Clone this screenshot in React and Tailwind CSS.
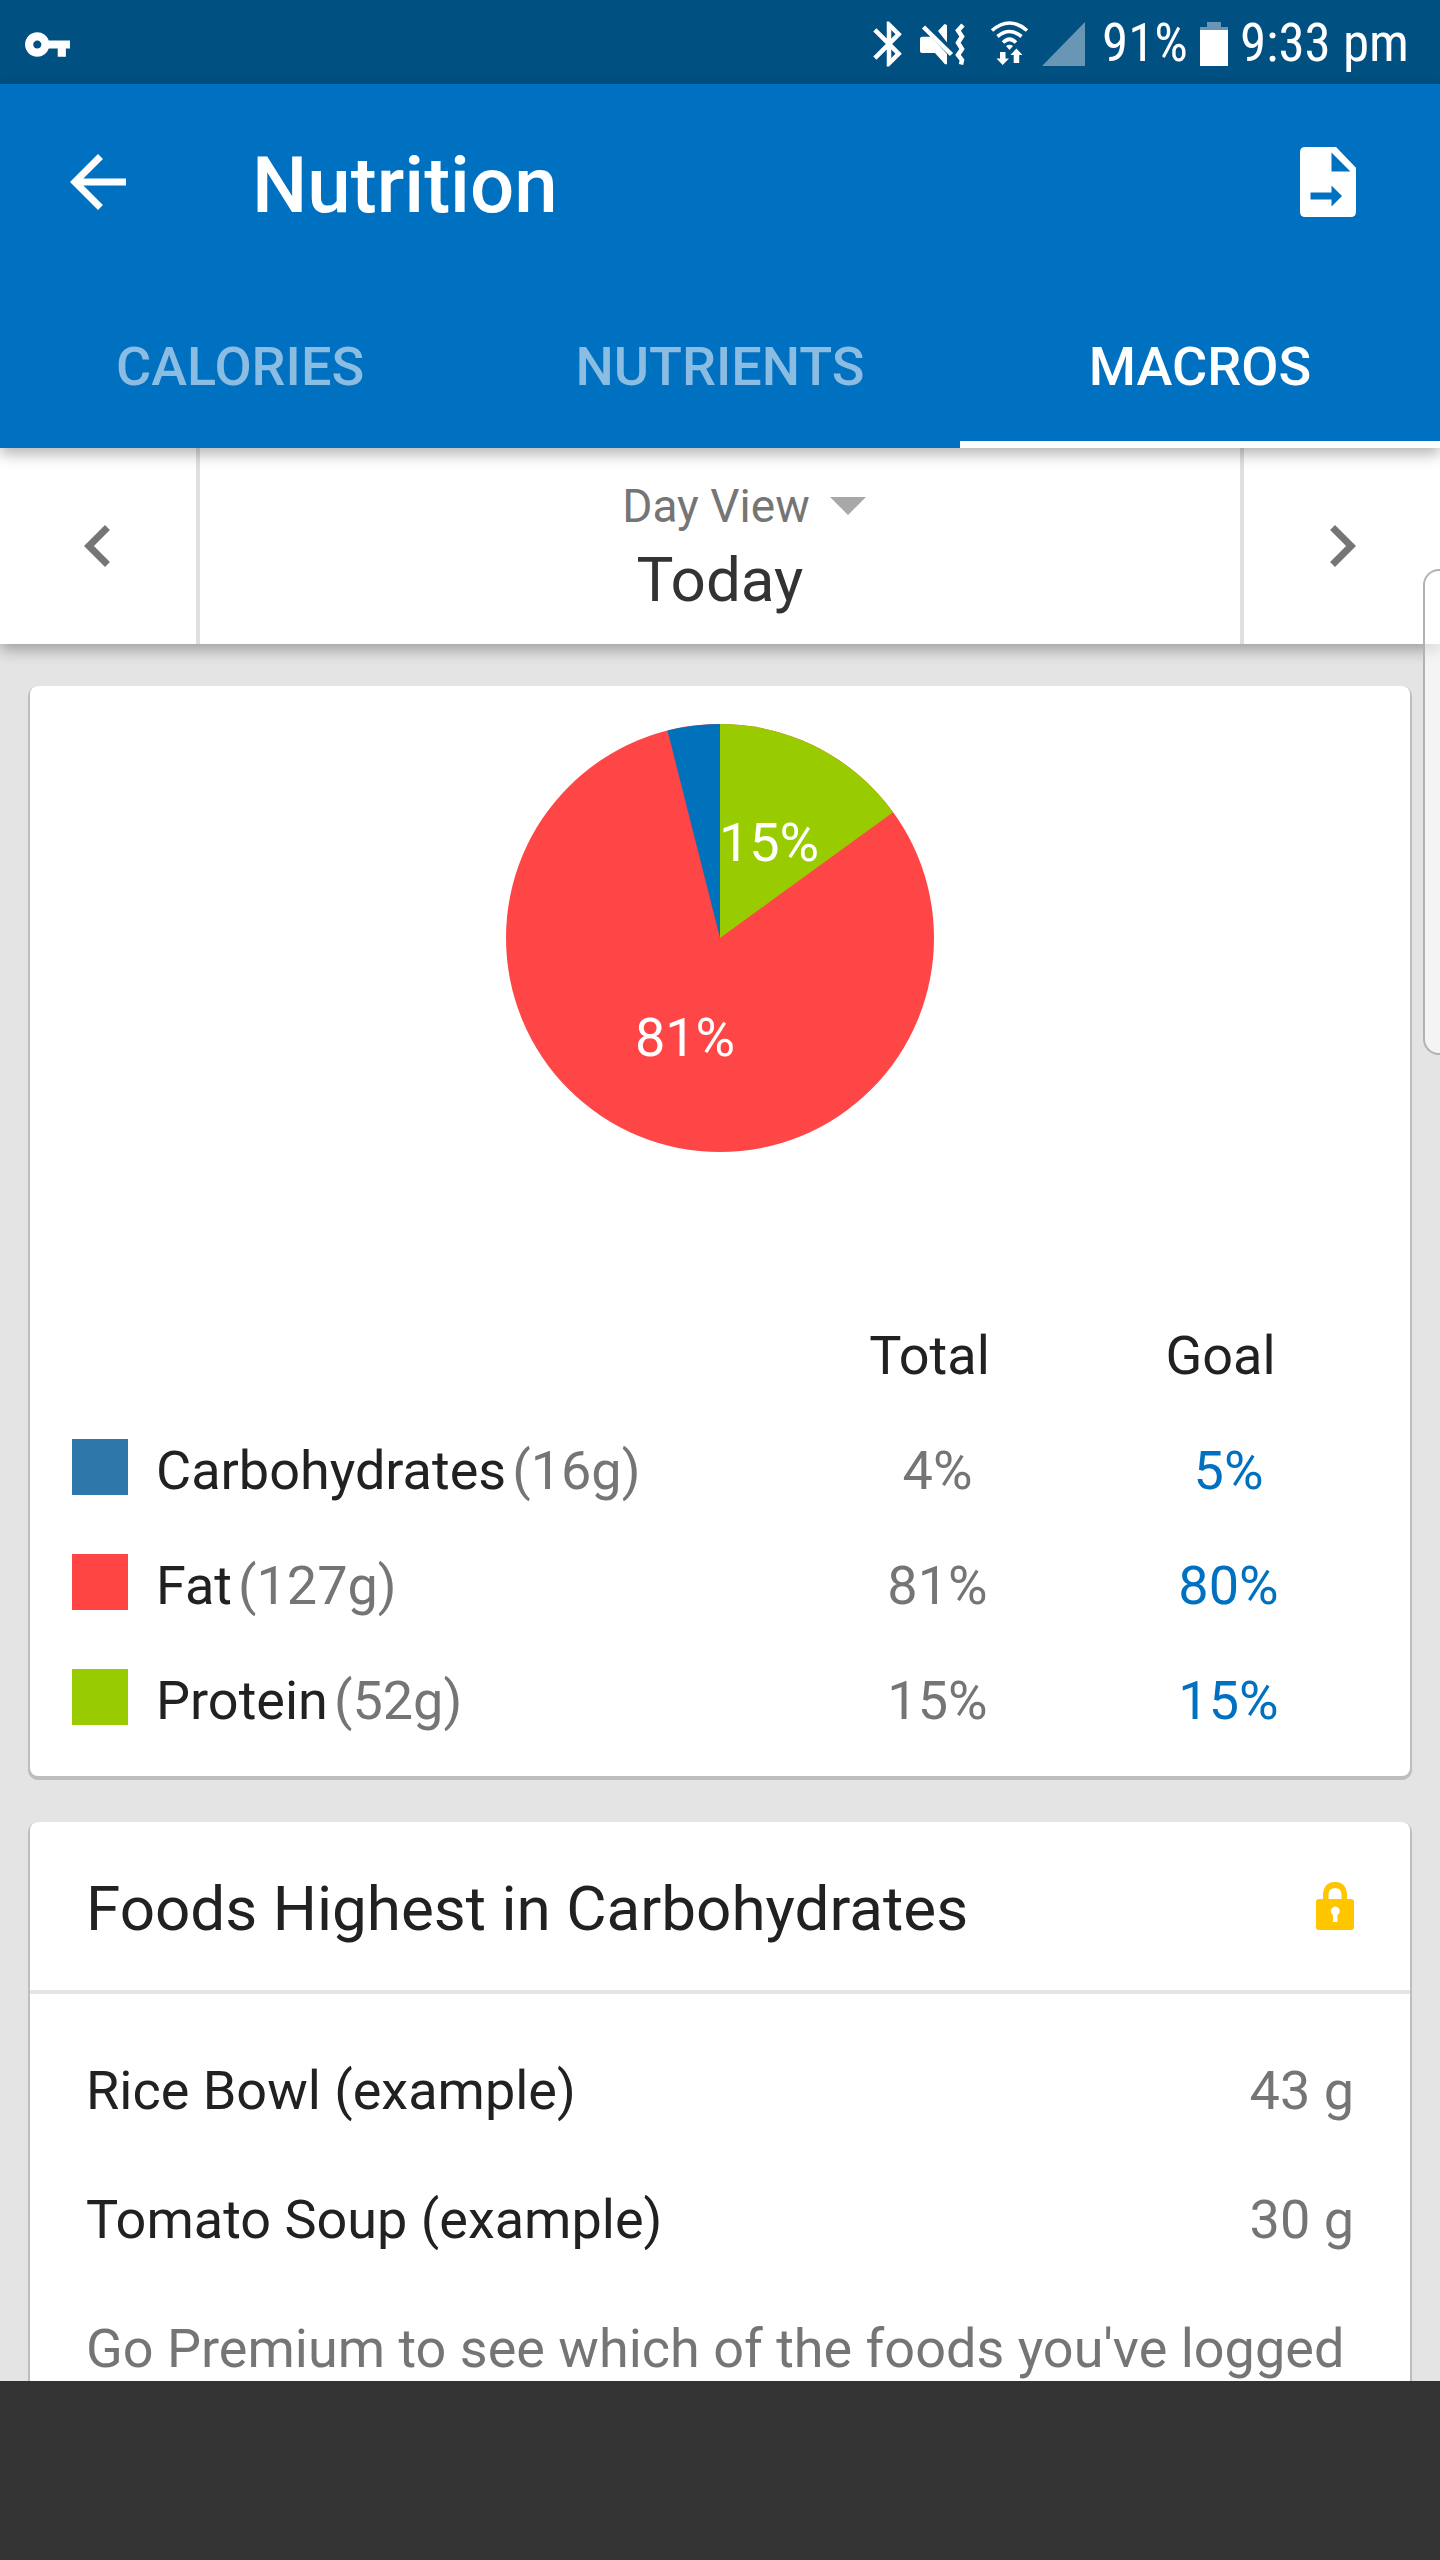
import React, { useState } from 'react';
import { MdArrowBack, MdBluetooth, MdChevronLeft, MdChevronRight, MdVpnKey } from 'react-icons/md';

const tabs = ['CALORIES', 'NUTRIENTS', 'MACROS'];

const macros = [
  { name: 'Carbohydrates', grams: 16, total: 4, goal: 5, swatch: 'bg-[#2e77aa]' },
  { name: 'Fat', grams: 127, total: 81, goal: 80, swatch: 'bg-[#ff4444]' },
  { name: 'Protein', grams: 52, total: 15, goal: 15, swatch: 'bg-[#99cc00]' },
];

const foods = [
  { name: 'Rice Bowl (example)', amount: '43 g' },
  { name: 'Tomato Soup (example)', amount: '30 g' },
];

function MuteIcon() {
  return (
    <svg className="ml-1 h-[46px] w-[46px]" viewBox="0 0 46 46" fill="currentColor" aria-hidden="true">
      <path d="M2 15.7H11L27 33V43.3H25L15 32H2Q0 32 0 30V17.7Q0 15.7 2 15.7Z" />
      <path d="M18 10L24.5 3L27 4V21.5Z" />
      <path
        d="M3.5 6L31.5 33.5M43 4L38 9.5L42 15.5L38 21.7L42 28L38 34L42 39L41 43.5"
        fill="none"
        stroke="currentColor"
        strokeWidth="4.5"
      />
    </svg>
  );
}

function WifiIcon() {
  return (
    <svg className="ml-6 h-[46px] w-10" viewBox="0 0 40 46" fill="currentColor" aria-hidden="true">
      <path
        d="M2 9.5Q19.5 -5.5 37 9.5M7.5 15.5Q19.5 5.5 31.5 15.5M13 21.5Q19.5 15 26 21.5"
        fill="none"
        stroke="currentColor"
        strokeWidth="3.6"
      />
      <path d="M16 25Q19.5 22.5 23 25L19.5 29Z" />
      <path d="M10 31H15.5V37.5H19L12.7 44L6.5 37.5H10Z" />
      <path d="M26.4 27.5L32.5 34H29.2V42H23.7V34H20.5Z" />
    </svg>
  );
}

function SignalIcon() {
  return (
    <svg className="ml-3 h-11 w-11" viewBox="0 0 44 44" fill="#6996b4" aria-hidden="true">
      <path d="M0 44L43 0V44Z" />
    </svg>
  );
}

function BatteryIcon() {
  return (
    <svg className="ml-3 h-11 w-7" viewBox="0 0 28 44" aria-hidden="true">
      <path d="M7 0H21V5H28V9H0V5H7Z" fill="#6996b4" />
      <path d="M0 8H28V44H0Z" fill="#fff" />
    </svg>
  );
}

function ExportIcon() {
  return (
    <svg className="h-[84px] w-[84px]" viewBox="0 0 24 24" fill="currentColor" aria-hidden="true">
      <path
        fillRule="evenodd"
        d="M5.5 2H14.3L20 7.9V20.5Q20 22 18.5 22H5.5Q4 22 4 20.5V3.5Q4 2 5.5 2ZM13 3.6V9H18.4ZM13 13V15H7V17H13V19L16 16Z"
      />
    </svg>
  );
}

function LockIcon() {
  return (
    <svg className="h-12 w-[38px]" viewBox="0 0 38 48" fill="#ffc600" aria-hidden="true">
      <path
        fillRule="evenodd"
        d="M7 17V12Q8 0 19 0Q30 0 31 12V17H35Q38 17 38 20V45Q38 48 35 48H3Q0 48 0 45V20Q0 17 3 17ZM12.5 17H25.5V12Q25 6 19 6Q13 6 12.5 12ZM17 33V40H21.5V33A4.5 4.5 0 1 0 17 33Z"
      />
    </svg>
  );
}

function MacroPie() {
  return (
    <svg className="mx-auto mb-[146px] block h-[428px] w-[428px]" viewBox="0 0 428 428" role="img" aria-label="Macros">
      <circle cx="214" cy="214" r="214" fill="#ff4646" />
      <path d="M214 214V0A214 214 0 0 1 387.1 88.2Z" fill="#99cc00" />
      <path d="M214 214L161.5 6.6A214 214 0 0 1 214 0Z" fill="#0072bc" />
      <g fill="#fff" className="text-[54px]" textAnchor="middle">
        <text x="263" y="137">15%</text>
        <text x="179" y="332">81%</text>
      </g>
    </svg>
  );
}

function App() {
  const [activeTab, setActiveTab] = useState('MACROS');
  const [view, setView] = useState('day');

  return (
    <div className="relative flex h-screen flex-col overflow-hidden bg-[#e4e4e4] font-['Roboto',sans-serif] text-[54px] text-[#212121]">
      {/* Status bar */}
      <div className="flex h-[84px] shrink-0 items-center bg-[#005082] pt-1 pr-[31px] pl-[23px] font-['Roboto_Condensed','Roboto',sans-serif] text-[53px] text-white">
        <MdVpnKey className="mr-auto h-[49px] w-[49px]" />
        <MdBluetooth className="h-[54px] w-[54px]" />
        <MuteIcon />
        <WifiIcon />
        <SignalIcon />
        <span className="ml-4">91%</span>
        <BatteryIcon />
        <span className="ml-3">9:33 pm</span>
      </div>

      {/* App bar */}
      <header className="z-20 shrink-0 bg-[#0070c0] text-white shadow-[0_6px_14px_rgba(0,0,0,0.3)]">
        <div className="flex h-[196px] items-center pr-[70px] pl-14">
          <button type="button" aria-label="Back">
            <MdArrowBack className="h-[84px] w-[84px]" />
          </button>
          <h1 className="ml-28 flex-1 pt-1.5 text-[78px] font-medium">Nutrition</h1>
          <button type="button" aria-label="Export">
            <ExportIcon />
          </button>
        </div>
        <nav className="grid h-[168px] grid-cols-3">
          {tabs.map((tab) => (
            <button
              key={tab}
              type="button"
              onClick={() => setActiveTab(tab)}
              className={
                tab === activeTab
                  ? 'border-y-[7px] border-t-transparent border-b-white pt-1 font-medium'
                  : 'border-y-[7px] border-transparent pt-1 font-medium text-[#8bbce2]'
              }
            >
              {tab}
            </button>
          ))}
        </nav>
      </header>

      {/* Date picker */}
      <section className="z-10 flex shrink-0 bg-white shadow-[0_6px_14px_rgba(0,0,0,0.3)]">
        <button type="button" aria-label="Previous day" className="border-r-4 border-[#dfdfdf] px-14 text-[#757575]">
          <MdChevronLeft className="h-[84px] w-[84px]" />
        </button>
        <div className="flex flex-1 flex-col items-center gap-1 pt-7 pb-6">
          <div className="flex h-[60px] items-center gap-5 pl-12">
            <select
              aria-label="View"
              value={view}
              onChange={(e) => setView(e.target.value)}
              className="field-sizing-content appearance-none text-[46px] text-[#757575]"
            >
              <option value="day">Day View</option>
              <option value="week">Week View</option>
            </select>
            <svg className="h-[18px] w-9" viewBox="0 0 36 18" fill="#a8a8a8" aria-hidden="true">
              <path d="M0 0H36L18 18Z" />
            </svg>
          </div>
          <p className="text-[62px] leading-[80px] text-[#333333]">Today</p>
        </div>
        <button type="button" aria-label="Next day" className="border-l-4 border-[#dfdfdf] px-14 text-[#757575]">
          <MdChevronRight className="h-[84px] w-[84px]" />
        </button>
      </section>

      <main className="flex min-h-0 flex-1 flex-col gap-[46px] overflow-hidden px-[30px] pt-[42px]">
        {/* Macro breakdown */}
        <section className="shrink-0 rounded-lg bg-white pt-[38px] pb-[18px] shadow-[0_2px_0_2px_#bdbdbd]">
          <MacroPie />
          <div className="pr-[36px] pl-[42px]">
            <table className="w-full table-fixed">
              <thead>
                <tr className="h-[115px]">
                  <td></td>
                  <th scope="col" className="w-[291px] pr-4 font-normal">Total</th>
                  <th scope="col" className="w-[291px] pr-4 font-normal">Goal</th>
                </tr>
              </thead>
              <tbody>
                {macros.map((macro) => (
                  <tr key={macro.name} className="h-[115px] text-center text-[#757575]">
                    <th scope="row" className="font-normal">
                      <div className="flex items-center">
                        <span className={`mr-7 mb-2 h-14 w-14 ${macro.swatch}`}></span>
                        <span className="mr-1.5 text-[#212121]">{macro.name}</span>
                        <span>({macro.grams}g)</span>
                      </div>
                    </th>
                    <td>{macro.total}%</td>
                    <td className="text-[#0070c0]">{macro.goal}%</td>
                  </tr>
                ))}
              </tbody>
            </table>
          </div>
        </section>

        {/* Top foods */}
        <section className="flex-1 rounded-t-lg bg-white shadow-[0_2px_0_2px_#bdbdbd]">
          <div className="flex h-[172px] items-center justify-between border-b-4 border-[#e4e4e4] px-14">
            <h2 className="pt-1 text-[62px]">Foods Highest in Carbohydrates</h2>
            <LockIcon />
          </div>
          <div className="px-14 pt-8">
            <table className="w-full">
              <tbody>
                {foods.map((food) => (
                  <tr key={food.name} className="h-[129px]">
                    <th scope="row" className="text-left font-normal">{food.name}</th>
                    <td className="text-right text-[#757575]">{food.amount}</td>
                  </tr>
                ))}
              </tbody>
            </table>
            <p className="leading-[129px] text-[#757575]">Go Premium to see which of the foods you've logged</p>
          </div>
        </section>
      </main>

      <footer className="z-10 h-[179px] shrink-0 bg-[#333333]"></footer>

      {/* Edge panel handle */}
      <div className="absolute top-[569px] right-0 z-30 h-[486px] w-[17px] rounded-l-[16px] border-2 border-r-0 border-[#b2b2b2] bg-white/60"></div>
    </div>
  );
}

export default App;
